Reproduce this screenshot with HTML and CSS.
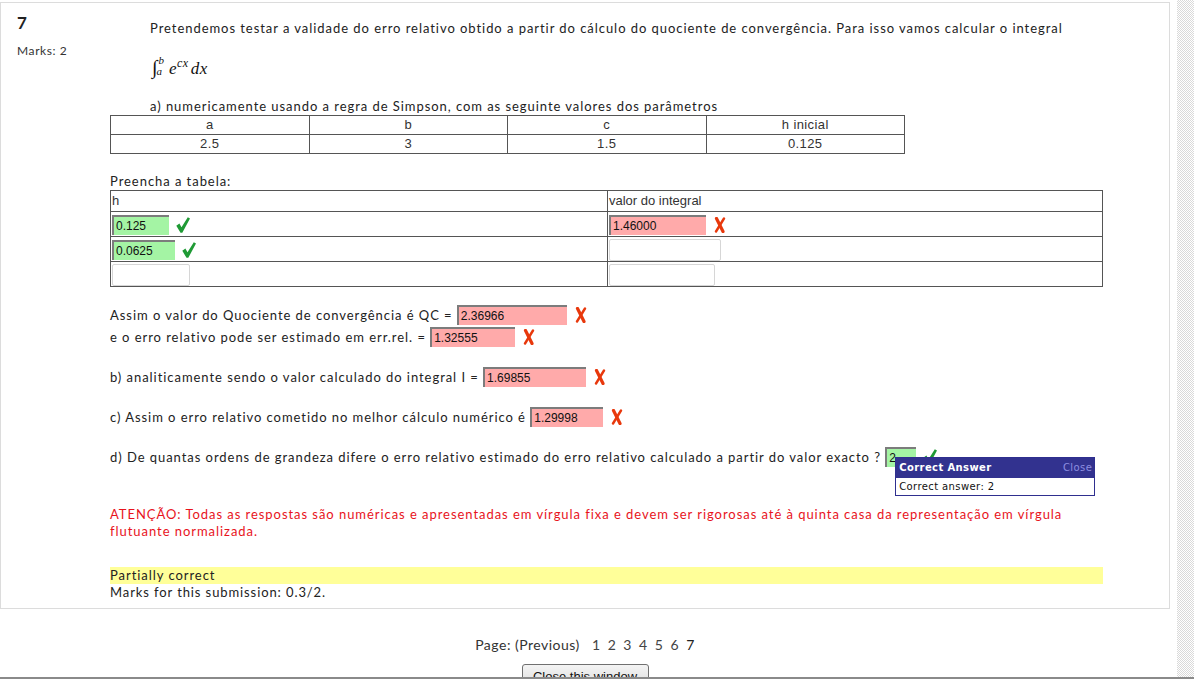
FILE: index.html
```html
<!DOCTYPE html>
<html lang="pt">
<head>
<meta charset="utf-8">
<title>Quiz</title>
<link rel="stylesheet" href="styles.css">
</head>
<body>
<div class="window">
  <div class="viewport">
    <div class="que">
      <div class="info">
        <div class="qno">7</div>
        <div class="grade">Marks: 2</div>
      </div>
      <div class="content">
        <p class="text indent">Pretendemos testar a validade do erro relativo obtido a partir do cálculo do quociente de convergência. Para isso vamos calcular o integral</p>
        <div class="formula"><span class="int">∫</span><span class="limits"><span class="up">b</span><span class="down">a</span></span><span class="expr">e<sup>cx</sup>dx</span></div>
        <p class="text indent para-a">a) numericamente usando a regra de Simpson, com as seguinte valores dos parâmetros</p>
        <table class="params">
          <tr><td>a</td><td>b</td><td>c</td><td>h inicial</td></tr>
          <tr><td>2.5</td><td>3</td><td>1.5</td><td>0.125</td></tr>
        </table>
        <p class="text fill-label">Preencha a tabela:</p>
        <table class="answers">
          <tr class="head"><td class="col-h">h</td><td>valor do integral</td></tr>
          <tr>
            <td><span class="inp ok w57">0.125</span><svg class="mark check" viewBox="0 0 14 16"><path d="M0.3 8.8 L3.4 6.6 L5.5 10.2 L11.8 0.2 L14 1.6 L6.3 15.8 L4.5 15.8 Z"/></svg></td>
            <td><span class="inp bad w97">1.46000</span><svg class="mark cross" viewBox="0 0 12 16"><path class="s1" d="M2.5 1.5 L9 14.5"/><path class="s2" d="M10 1.5 L2 14.5"/></svg></td>
          </tr>
          <tr>
            <td><span class="inp ok w63">0.0625</span><svg class="mark check" viewBox="0 0 14 16"><path d="M0.3 8.8 L3.4 6.6 L5.5 10.2 L11.8 0.2 L14 1.6 L6.3 15.8 L4.5 15.8 Z"/></svg></td>
            <td><span class="inp empty w112"></span></td>
          </tr>
          <tr>
            <td><span class="inp empty w78"></span></td>
            <td><span class="inp empty w106"></span></td>
          </tr>
        </table>

        <div class="qc">
          <div class="line">Assim o valor do Quociente de convergência é QC = <span class="inp bad w110">2.36966</span><svg class="mark cross" viewBox="0 0 12 16"><path class="s1" d="M2.5 1.5 L9 14.5"/><path class="s2" d="M10 1.5 L2 14.5"/></svg></div>
          <div class="line">e o erro relativo pode ser estimado em err.rel. = <span class="inp bad w85">1.32555</span><svg class="mark cross" viewBox="0 0 12 16"><path class="s1" d="M2.5 1.5 L9 14.5"/><path class="s2" d="M10 1.5 L2 14.5"/></svg></div>
        </div>
        <div class="line gap">b) analiticamente sendo o valor calculado do integral I = <span class="inp bad w103">1.69855</span><svg class="mark cross" viewBox="0 0 12 16"><path class="s1" d="M2.5 1.5 L9 14.5"/><path class="s2" d="M10 1.5 L2 14.5"/></svg></div>
        <div class="line gap">c) Assim o erro relativo cometido no melhor cálculo numérico é <span class="inp bad w73">1.29998</span><svg class="mark cross" viewBox="0 0 12 16"><path class="s1" d="M2.5 1.5 L9 14.5"/><path class="s2" d="M10 1.5 L2 14.5"/></svg></div>
        <div class="line gap">d) De quantas ordens de grandeza difere o erro relativo estimado do erro relativo calculado a partir do valor exacto ? <span class="anchor"><span class="inp ok w31">2</span><svg class="mark check" viewBox="0 0 14 16"><path d="M0.3 8.8 L3.4 6.6 L5.5 10.2 L11.8 0.2 L14 1.6 L6.3 15.8 L4.5 15.8 Z"/></svg>
          <span class="tooltip"><span class="tip-head"><b>Correct Answer</b><span class="tip-close">Close</span></span><span class="tip-body">Correct answer: 2</span></span></span></div>

        <p class="text warn">ATENÇÃO: Todas as respostas são numéricas e apresentadas em vírgula fixa e devem ser rigorosas até à quinta casa da representação em vírgula flutuante normalizada.</p>

        <div class="feedback">Partially correct</div>
        <div class="marks">Marks for this submission: 0.3/2.</div>
      </div>
    </div>
    <div class="pager">Page: (Previous) <span class="nums">1 2 3 4 5 6 <b>7</b></span></div>
    <div class="close-wrap"><button class="close-btn">Close this window</button></div>
  </div>
  <div class="scrollbar"></div>
</div>
</body>
</html>
```

FILE: styles.css
```css
* { box-sizing: border-box; }
body {
  margin: 0;
  font-family: Lato, "Open Sans", sans-serif;
  font-size: 13px;
  color: #222;
  background: #fff;
}
.window {
  display: flex;
  height: 679px;
  overflow: hidden;
  border-bottom: 2px solid #8a8a8a;
}
.viewport {
  flex: 1;
  padding-top: 2px;
  overflow: hidden;
}
.scrollbar {
  width: 17px;
  background: repeating-conic-gradient(#d9d9d9 0 25%, #ffffff 0 50%) 0 0 / 2px 2px;
}
.que {
  display: flex;
  width: 1170px;
  border: 1px solid #dcdcdc;
}
.info {
  width: 109px;
  padding: 10px 0 0 16px;
}
.qno {
  font-size: 17px;
  font-weight: bold;
  line-height: 20px;
  color: #222;
}
.grade {
  font-size: 12px;
  line-height: 14px;
  margin-top: 11px;
  letter-spacing: 0.6px;
  color: #333;
}
.content {
  width: 993px;
  padding: 17px 0 7px;
}
.text {
  margin: 0;
  line-height: 17px;
  letter-spacing: 0.95px;
}
.indent { text-indent: 40px; }
.formula {
  height: 24px;
  margin-top: 18px;
  display: flex;
  align-items: center;
  padding-left: 42px;
  font-family: "Liberation Serif", serif;
  font-style: italic;
  font-size: 17px;
  color: #111;
}
.int { font-style: normal; font-size: 20px; line-height: 22px; }
.limits {
  display: inline-flex;
  flex-direction: column;
  font-size: 11px;
  line-height: 11px;
  margin: -2px 5px 0 1px;
}
.limits .down { margin-left: -2px; }
.expr { letter-spacing: 0.5px; }
.expr sup { font-size: 12px; vertical-align: 7px; margin-right: 2px; }
.para-a { margin-top: 19px; }
table { border-collapse: collapse; font-family: "Liberation Sans", Arial, sans-serif; font-size: 13px; color: #333; }
.params { width: 795px; table-layout: fixed; }
.params td {
  border: 1px solid #555;
  height: 19px;
  padding: 0;
  text-align: center;
  line-height: 16px;
  letter-spacing: 0.4px;
}
.fill-label { margin-top: 19px; }
.answers { width: 993px; table-layout: fixed; }
.answers .col-h { width: 497px; }
.answers td {
  border: 1px solid #555;
  padding: 1px 1px 0;
  height: 25px;
  vertical-align: middle;
}
.answers tr.head td { height: 21px; line-height: 18px; padding: 0 1px; }
.inp {
  display: inline-block;
  vertical-align: middle;
  height: 20px;
  line-height: 18px;
  padding: 0 2px;
  font-family: "Liberation Sans", Arial, sans-serif;
  font-size: 12px;
  color: #111;
  letter-spacing: 0;
  border-top: 2px solid #7c7c7c;
  border-left: 2px solid #7c7c7c;
}
.inp.ok { background: #a4f4a4; }
.inp.bad { background: #ffaaaa; }
.inp.empty {
  height: 22px;
  background: #fff;
  border: 1px solid #d6d6d6;
  border-radius: 2px;
}
.w31 { width: 31px; }
.w57 { width: 57px; }
.w63 { width: 63px; }
.w73 { width: 73px; }
.w78 { width: 78px; }
.w85 { width: 85px; }
.w97 { width: 97px; }
.w103 { width: 103px; }
.w106 { width: 106px; }
.w110 { width: 110px; }
.w112 { width: 112px; }
.mark { display: inline-block; vertical-align: middle; margin-left: 7px; }
.mark.check { width: 14px; height: 16px; }
.mark.check path { fill: #1f9a35; }
.mark.cross { width: 12px; height: 16px; margin-left: 8px; }
.mark.cross path { stroke: #e8380c; fill: none; stroke-linecap: round; }
.mark.cross .s1 { stroke-width: 3.2; }
.mark.cross .s2 { stroke-width: 2.4; }
.qc { margin-top: 17px; }
.line {
  height: 22px;
  line-height: 22px;
  display: flex;
  align-items: center;
  letter-spacing: 0.95px;
  white-space: pre;
}
.line.gap { margin-top: 18px; }
.anchor { position: relative; display: inline-flex; align-items: center; }
.tooltip {
  position: absolute;
  left: 10px;
  top: 10px;
  width: 200px;
  border: 1px solid #2f2f8f;
  background: #fff;
  font-family: "DejaVu Sans", sans-serif;
  font-size: 10px;
  letter-spacing: 0.4px;
  line-height: 16px;
  white-space: nowrap;
  z-index: 2;
}
.tip-head {
  display: flex;
  justify-content: space-between;
  background: #32328f;
  color: #fff;
  height: 20px;
  line-height: 20px;
  padding: 0 2px 0 3px;
}
.tip-head b { font-weight: bold; }
.tip-close { color: #8e8ee0; }
.tip-body { display: block; height: 17px; line-height: 17px; padding-left: 3px; color: #111; }
.warn { color: #e8131c; margin-top: 38px; }
.feedback {
  margin-top: 27px;
  background: #ffff99;
  height: 17px;
  line-height: 17px;
  letter-spacing: 0.95px;
}
.marks {
  font-size: 13px;
  line-height: 17px;
  letter-spacing: 0.9px;
}
.pager {
  width: 1170px;
  text-align: center;
  margin-top: 27px;
  line-height: 17px;
  font-size: 14px;
  letter-spacing: 0.5px;
  color: #333;
}
.pager .nums { margin-left: 8px; word-spacing: 3px; color: #444; }
.pager .nums b { color: #222; font-weight: normal; }
.close-wrap { width: 1170px; text-align: center; margin-top: 11px; }
.close-btn {
  font-family: "Liberation Sans", Arial, sans-serif;
  font-size: 13px;
  width: 127px;
  height: 24px;
  border: 1px solid #707070;
  border-radius: 3px;
  background: linear-gradient(#f4f4f4, #dcdcdc);
  color: #111;
  padding: 0;
}
```
